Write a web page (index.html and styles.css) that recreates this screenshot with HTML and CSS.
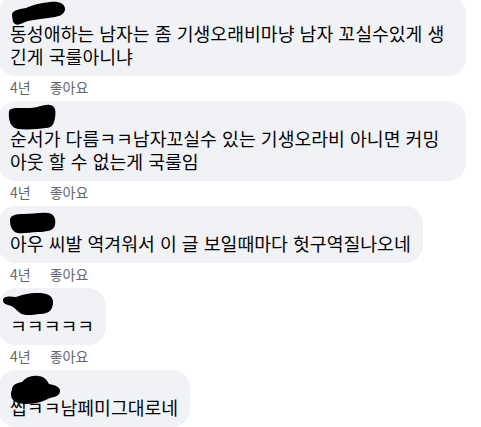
FILE: index.html
```html
<!DOCTYPE html>
<html lang="ko">
<head>
<meta charset="utf-8">
<title>댓글</title>
<link rel="stylesheet" href="styles.css">
</head>
<body>
<div class="comments">
  <div class="comment">
    <div class="bubble">
      <div class="name">
        <svg class="blob" width="56" height="20" viewBox="0 0 56 20"><path d="M2 14 C1 9 8 7 16 6 C22 3 30 1 40 0 C48 -1 55 1 55 7 C55 13 48 15 38 16 C30 17 24 18 18 19 C12 21 8 24 5 22 C2 20 3 17 2 14 Z"/></svg>
      </div>
      <p class="text">동성애하는 남자는 좀 기생오래비마냥 남자 꼬실수있게 생긴게 국룰아니냐</p>
    </div>
    <div class="meta"><span>4년</span><span class="like">좋아요</span></div>
  </div>
  <div class="comment">
    <div class="bubble">
      <div class="name">
        <svg class="blob" width="46" height="20" viewBox="0 0 46 20"><path d="M-1 4 C0 0 10 1 20 1 C28 1 34 -3 40 -2 C46 -1 46 5 45 11 C44 17 42 21 36 21 C28 22 18 23 8 22 C1 21 -2 14 -1 4 Z"/></svg>
      </div>
      <p class="text">순서가 다름ㅋㅋ남자꼬실수 있는 기생오라비 아니면 커밍 아웃 할 수 없는게 국룰임</p>
    </div>
    <div class="meta"><span>4년</span><span class="like">좋아요</span></div>
  </div>
  <div class="comment">
    <div class="bubble">
      <div class="name">
        <svg class="blob" width="46" height="20" viewBox="0 0 46 20"><path d="M0 8 C0 3 6 2 14 2 C22 2 30 0 38 1 C45 2 46 8 45 13 C44 18 38 20 28 20 C20 20 14 22 8 21 C2 20 0 14 0 8 Z"/></svg>
      </div>
      <p class="text">아우 씨발 역겨워서 이 글 보일때마다 헛구역질나오네</p>
    </div>
    <div class="meta"><span>4년</span><span class="like">좋아요</span></div>
  </div>
  <div class="comment">
    <div class="bubble">
      <div class="name">
        <svg class="blob" width="44" height="20" viewBox="0 0 44 20"><path d="M-7 6 C-7 2 0 2 6 3 C12 1 18 -1 28 -1 C36 -1 43 1 43 8 C43 15 40 20 30 20 C22 21 14 22 10 19 C6 16 4 12 -2 11 C-6 10 -7 8 -7 6 Z"/></svg>
      </div>
      <p class="text">ㅋㅋㅋㅋㅋ</p>
    </div>
    <div class="meta"><span>4년</span><span class="like">좋아요</span></div>
  </div>
  <div class="comment">
    <div class="bubble">
      <div class="name">
        <svg class="blob" width="50" height="20" viewBox="0 0 50 20"><path d="M2 14 C2 9 6 7 12 6 C16 1 22 -1 28 0 C34 0 37 4 39 8 C45 9 50 11 50 15 C50 20 44 21 40 22 C34 25 26 28 16 28 C6 28 1 24 1 19 C1 17 1 15 2 14 Z"/></svg>
      </div>
      <p class="text">씹ㅋㅋ남페미그대로네</p>
    </div>
  </div>
</div>
</body>
</html>
```

FILE: styles.css
```css
* {
  box-sizing: border-box;
}

html, body {
  margin: 0;
  padding: 0;
  background: #ffffff;
}

body {
  font-family: "Noto Sans CJK KR", "Noto Sans", sans-serif;
  color: #050505;
  overflow: hidden;
}

.comments {
  display: flex;
  flex-direction: column;
  align-items: flex-start;
  margin-top: -4px;
  margin-left: -2px;
}

.comment {
  display: flex;
  flex-direction: column;
  align-items: flex-start;
}

.bubble {
  background: #f0f2f5;
  border-radius: 18px;
  padding: 6px 12px 8px 12px;
  max-width: 468px;
}

.name {
  height: 20px;
}

.blob {
  display: block;
  overflow: visible;
  fill: #000000;
}

.text {
  margin: 0;
  font-size: 18.3px;
  line-height: 23px;
}

.meta {
  display: flex;
  gap: 19px;
  padding: 3px 0 0 12px;
  margin-bottom: 6px;
  font-size: 14px;
  line-height: 16px;
  color: #65676b;
}
```
